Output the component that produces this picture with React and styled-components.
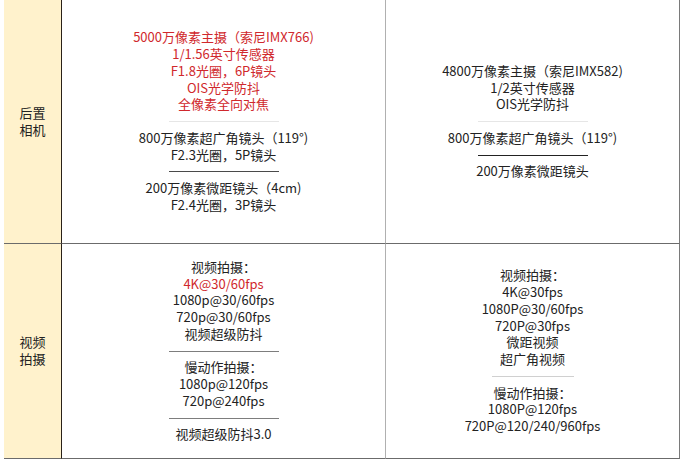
import React from "react";
import styled, { createGlobalStyle } from "styled-components";

const Global = createGlobalStyle`
  html, body { margin: 0; padding: 0; background: #fff; }
  body { font-family: "Noto Sans CJK SC", "Noto Sans", sans-serif; }
`;

const Table = styled.div`
  margin-left: 4px;
  width: 676px;
  display: grid;
  grid-template-columns: 58px 324px 294px;
  grid-template-rows: 244px 215px;
`;

const LabelCell = styled.div`
  background: #fff2cc;
  border-right: 1px solid #2a2118;
  border-bottom: 1px solid #6b6b6b;
  display: flex;
  align-items: center;
  justify-content: center;
  font-size: 13px;
  line-height: 16.75px;
  color: #222;
  text-align: center;
`;

const Cell = styled.div`
  border-right: 1px solid ${(p) => (p.$last ? "#7a7a7a" : "#b0b0b0")};
  border-bottom: 1px solid #6b6b6b;
  display: flex;
  flex-direction: column;
  align-items: center;
  justify-content: center;
  padding-top: ${(p) => p.$shift || 0}px;
`;

const Line = styled.div`
  font-size: 13px;
  line-height: 16.75px;
  color: ${(p) => (p.$red ? "#d0282c" : "#222")};
  white-space: nowrap;
  text-align: center;
`;

const Sep = styled.div`
  height: 16.75px;
  display: flex;
  align-items: center;
  &::before {
    content: "";
    display: block;
    width: ${(p) => p.$w || 110}px;
    height: 1px;
    background: ${(p) => p.$c};
  }
`;

const FAINT = "#e6e6e6";
const DARK = "#4a4a4a";
const MID = "#7d7d7d";

export default function App() {
  return (
    <>
      <Global />
      <Table>
        <LabelCell>
          后置
          <br />
          相机
        </LabelCell>
        <Cell>
          <Line $red>5000万像素主摄（索尼IMX766)</Line>
          <Line $red>1/1.56英寸传感器</Line>
          <Line $red>F1.8光圈，6P镜头</Line>
          <Line $red>OIS光学防抖</Line>
          <Line $red>全像素全向对焦</Line>
          <Sep $c={FAINT} />
          <Line>800万像素超广角镜头（119°)</Line>
          <Line>F2.3光圈，5P镜头</Line>
          <Sep $c={DARK} />
          <Line>200万像素微距镜头（4cm)</Line>
          <Line>F2.4光圈，3P镜头</Line>
        </Cell>
        <Cell $last>
          <Line>4800万像素主摄（索尼IMX582)</Line>
          <Line>1/2英寸传感器</Line>
          <Line>OIS光学防抖</Line>
          <Sep $c={FAINT} />
          <Line>800万像素超广角镜头（119°)</Line>
          <Sep $c="#222" />
          <Line>200万像素微距镜头</Line>
        </Cell>

        <LabelCell>
          视频
          <br />
          拍摄
        </LabelCell>
        <Cell>
          <Line>视频拍摄：</Line>
          <Line $red>4K@30/60fps</Line>
          <Line>1080p@30/60fps</Line>
          <Line>720p@30/60fps</Line>
          <Line>视频超级防抖</Line>
          <Sep $c={MID} />
          <Line>慢动作拍摄：</Line>
          <Line>1080p@120fps</Line>
          <Line>720p@240fps</Line>
          <Sep $c={MID} />
          <Line>视频超级防抖3.0</Line>
        </Cell>
        <Cell $last>
          <Line>视频拍摄：</Line>
          <Line>4K@30fps</Line>
          <Line>1080P@30/60fps</Line>
          <Line>720P@30fps</Line>
          <Line>微距视频</Line>
          <Line>超广角视频</Line>
          <Sep $c="#d0d0d0" $w={82} />
          <Line>慢动作拍摄：</Line>
          <Line>1080P@120fps</Line>
          <Line>720P@120/240/960fps</Line>
        </Cell>
      </Table>
    </>
  );
}
